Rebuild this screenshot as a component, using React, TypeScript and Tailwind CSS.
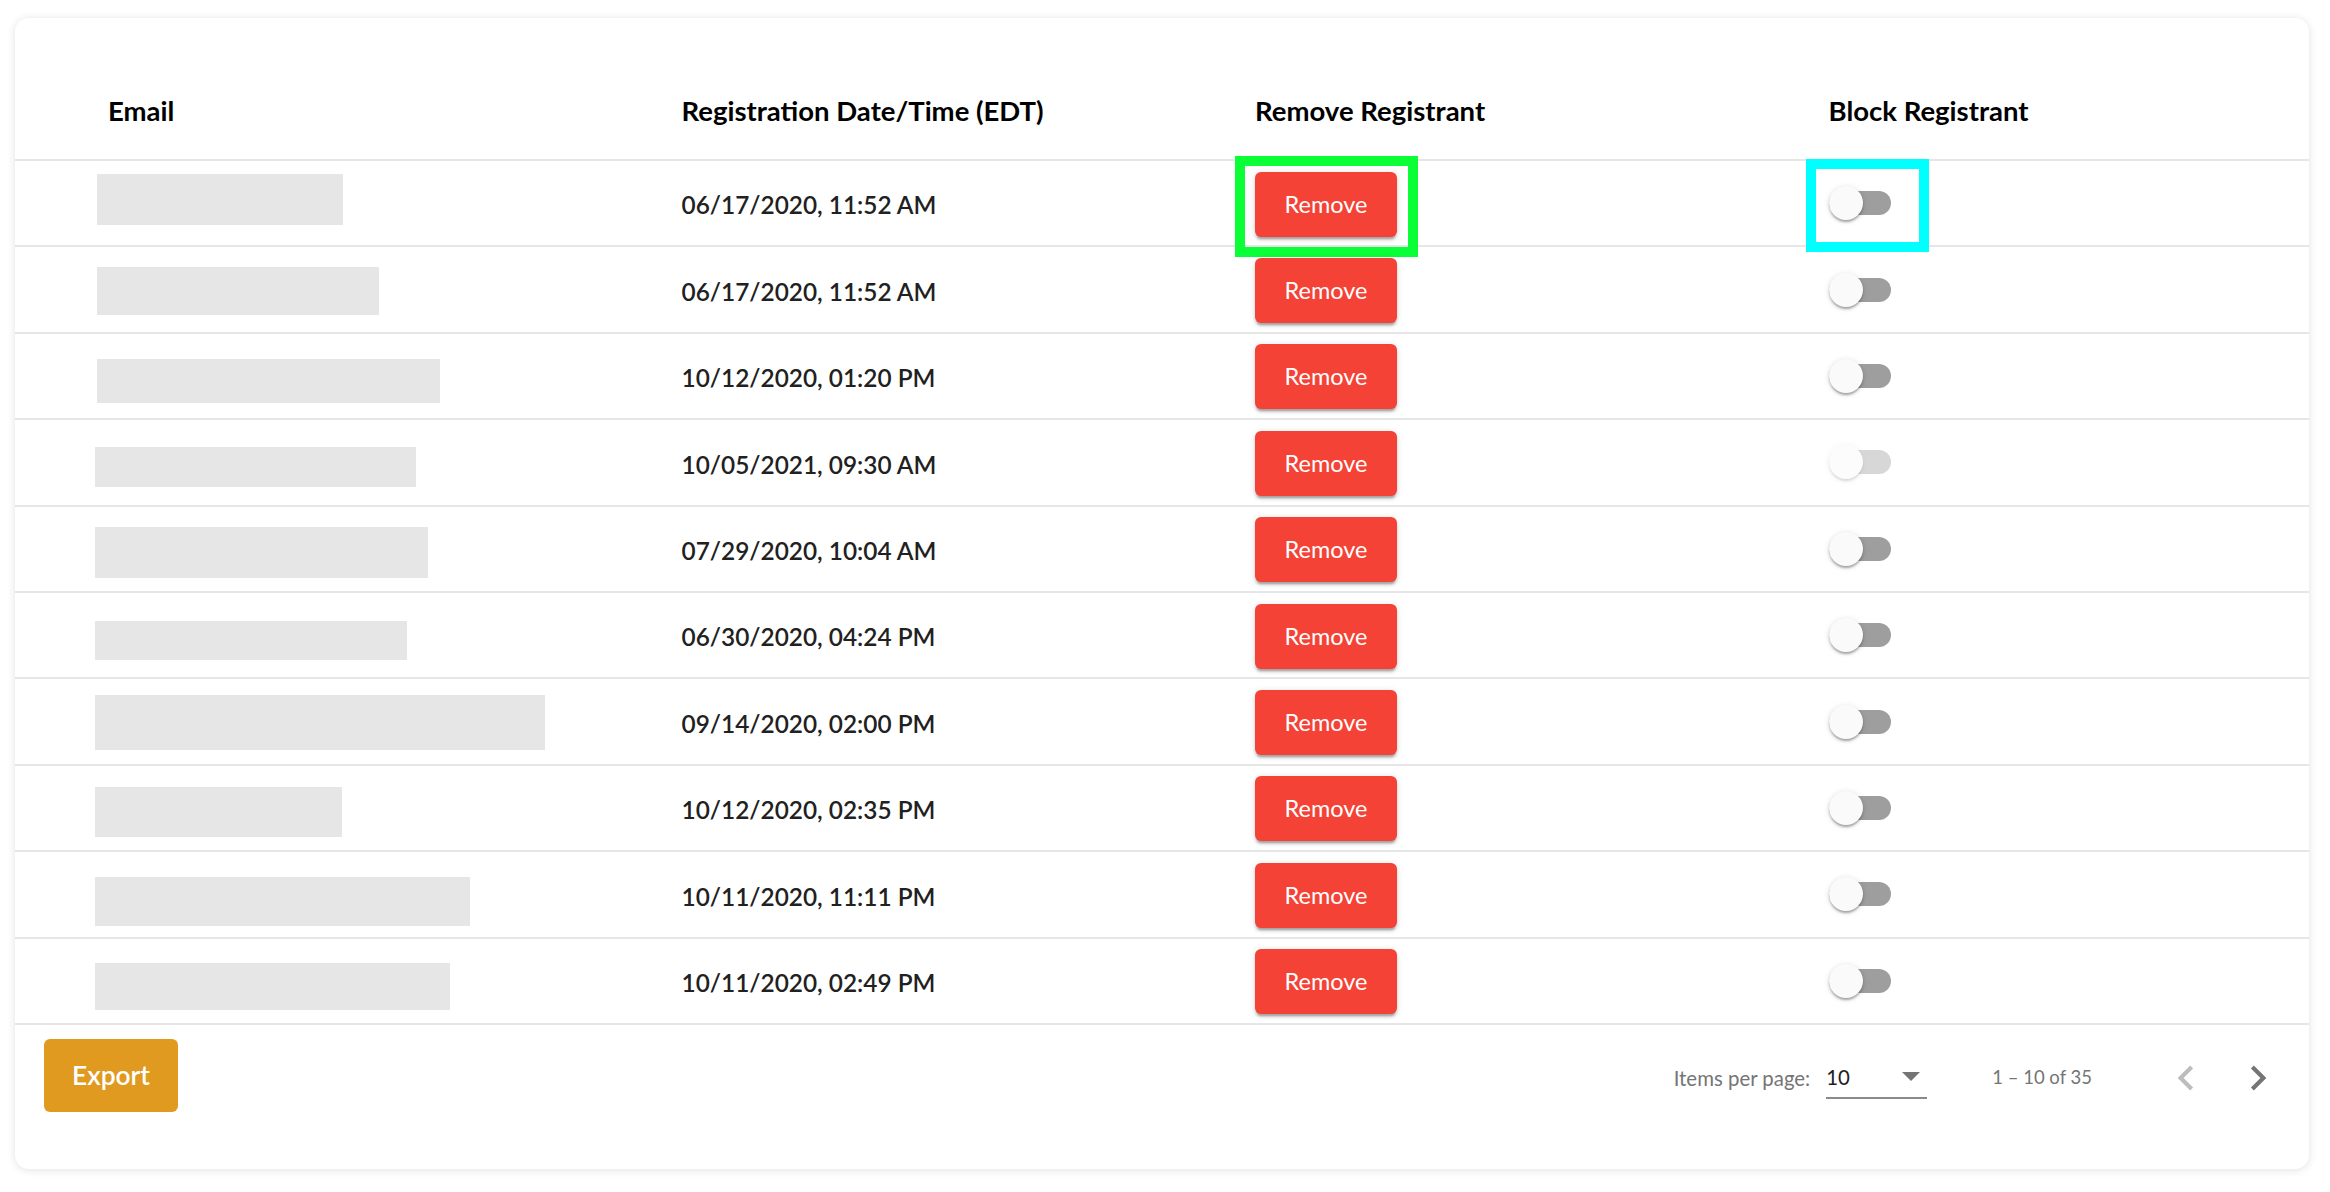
type Row = { date: string; w: number; h: number; t: number; x: number; disabled?: boolean };

const rows: Row[] = [
  { date: "06/17/2020, 11:52 AM", w: 246, h: 51, t: 13, x: -11 },
  { date: "06/17/2020, 11:52 AM", w: 282, h: 48, t: 20, x: -11 },
  { date: "10/12/2020, 01:20 PM", w: 343, h: 44, t: 25, x: -11 },
  { date: "10/05/2021, 09:30 AM", w: 321, h: 40, t: 27, x: -13, disabled: true },
  { date: "07/29/2020, 10:04 AM", w: 333, h: 51, t: 20, x: -13 },
  { date: "06/30/2020, 04:24 PM", w: 312, h: 39, t: 28, x: -13 },
  { date: "09/14/2020, 02:00 PM", w: 450, h: 55, t: 16, x: -13 },
  { date: "10/12/2020, 02:35 PM", w: 247, h: 50, t: 21, x: -13 },
  { date: "10/11/2020, 11:11 PM", w: 375, h: 49, t: 25, x: -13 },
  { date: "10/11/2020, 02:49 PM", w: 355, h: 47, t: 24, x: -13 },
];

const Toggle = ({ disabled }: { disabled?: boolean }) => (
  <div className={`relative h-[34px] w-[62px] ${disabled ? "opacity-40" : ""}`}>
    <div className="absolute left-0 top-[5px] h-[24px] w-[62px] rounded-full bg-[#9e9e9e]" />
    <div className="absolute left-0 top-0 h-[34px] w-[34px] rounded-full bg-[#fafafa] shadow-[0_3px_2px_-1px_rgba(0,0,0,0.2),0_2px_3px_rgba(0,0,0,0.14),0_1px_6px_rgba(0,0,0,0.12)]" />
  </div>
);

const RemoveButton = () => (
  <button className="h-[65px] w-[142px] rounded-[6px] bg-[#f44336] text-[23.5px] text-white shadow-[0_4px_2px_-2px_rgba(0,0,0,0.2),0_3px_3px_rgba(0,0,0,0.14),0_1px_7px_rgba(0,0,0,0.12)]">
    Remove
  </button>
);

const Chevron = ({ dir }: { dir: "left" | "right" }) => (
  <svg viewBox="0 0 24 24" className={`h-[50px] w-[50px] ${dir === "left" ? "fill-[#bdbdbd]" : "fill-[#757575]"}`}>
    {dir === "left" ? (
      <path d="M15.41 7.41L14 6l-6 6 6 6 1.41-1.41L10.83 12z" />
    ) : (
      <path d="M10 6L8.59 7.41 13.17 12l-4.58 4.59L10 18l6-6z" />
    )}
  </svg>
);

export default function App() {
  return (
    <div className="min-h-[1192px] bg-white pl-[15px] pt-[18px] font-['Lato',sans-serif]">
      <div className="w-[2294px] rounded-[14px] bg-white shadow-[0_1px_8px_rgba(0,0,0,0.12)]">
        <div className="grid h-[143px] grid-cols-4 items-center border-b-2 border-[#e6e6e6] pt-[44px] text-[27.5px] font-bold text-black">
          <div className="pl-[93px]">Email</div>
          <div className="pl-[93px]">Registration Date/Time (EDT)</div>
          <div className="pl-[93px]">Remove Registrant</div>
          <div className="pl-[93px]">Block Registrant</div>
        </div>

        {rows.map((r, i) => (
          <div key={i} className="grid h-[86.4px] grid-cols-4 border-b-2 border-[#e6e6e6]">
            <div className="flex items-start pl-[93px]">
              <div className="bg-[#e6e6e6]" style={{ width: r.w, height: r.h, marginTop: r.t, marginLeft: r.x }} />
            </div>
            <div className="flex items-center pl-[93px] pt-[5px] text-[24.4px] font-semibold text-[#212121]">
              {r.date}
            </div>
            <div className="flex items-center pl-[93px] pt-[2px]">
              <div className="relative">
                <RemoveButton />
                {i === 0 ? (
                  <div className="pointer-events-none absolute -left-[20px] -top-[16px] h-[101px] w-[183px] border-[10px] border-[#0aff36]" />
                ) : null}
              </div>
            </div>
            <div className="flex items-center pl-[93px]">
              <div className="relative">
                <Toggle disabled={r.disabled} />
                {i === 0 ? (
                  <div className="pointer-events-none absolute -left-[23px] -top-[27px] h-[93px] w-[123px] border-[10px] border-[#00ffff]" />
                ) : null}
              </div>
            </div>
          </div>
        ))}

        <div className="flex h-[144px] items-start justify-between">
          <button className="ml-[29px] mt-[14px] h-[73px] w-[134px] rounded-[6px] bg-[#df9a1f] text-[26.4px] font-semibold text-white">
            Export
          </button>
          <div className="mr-[26px] mt-[11px] flex h-[84px] items-center text-[20.4px] text-[#757575]">
            <span>Items per page:</span>
            <div className="mb-[4px] ml-[16px] flex h-[46px] w-[101px] items-center justify-between border-b-2 border-[#8a8a8a] pt-[4px]">
              <span className="text-[#212121]">10</span>
              <span className="mr-[7px] h-0 w-0 border-x-[9px] border-t-[9px] border-x-transparent border-t-[#757575]" />
            </div>
            <span className="ml-[65px] text-[18.5px]">1 – 10 of 35</span>
            <div className="ml-[69px] flex gap-[22px]">
              <Chevron dir="left" />
              <Chevron dir="right" />
            </div>
          </div>
        </div>
      </div>
    </div>
  );
}
